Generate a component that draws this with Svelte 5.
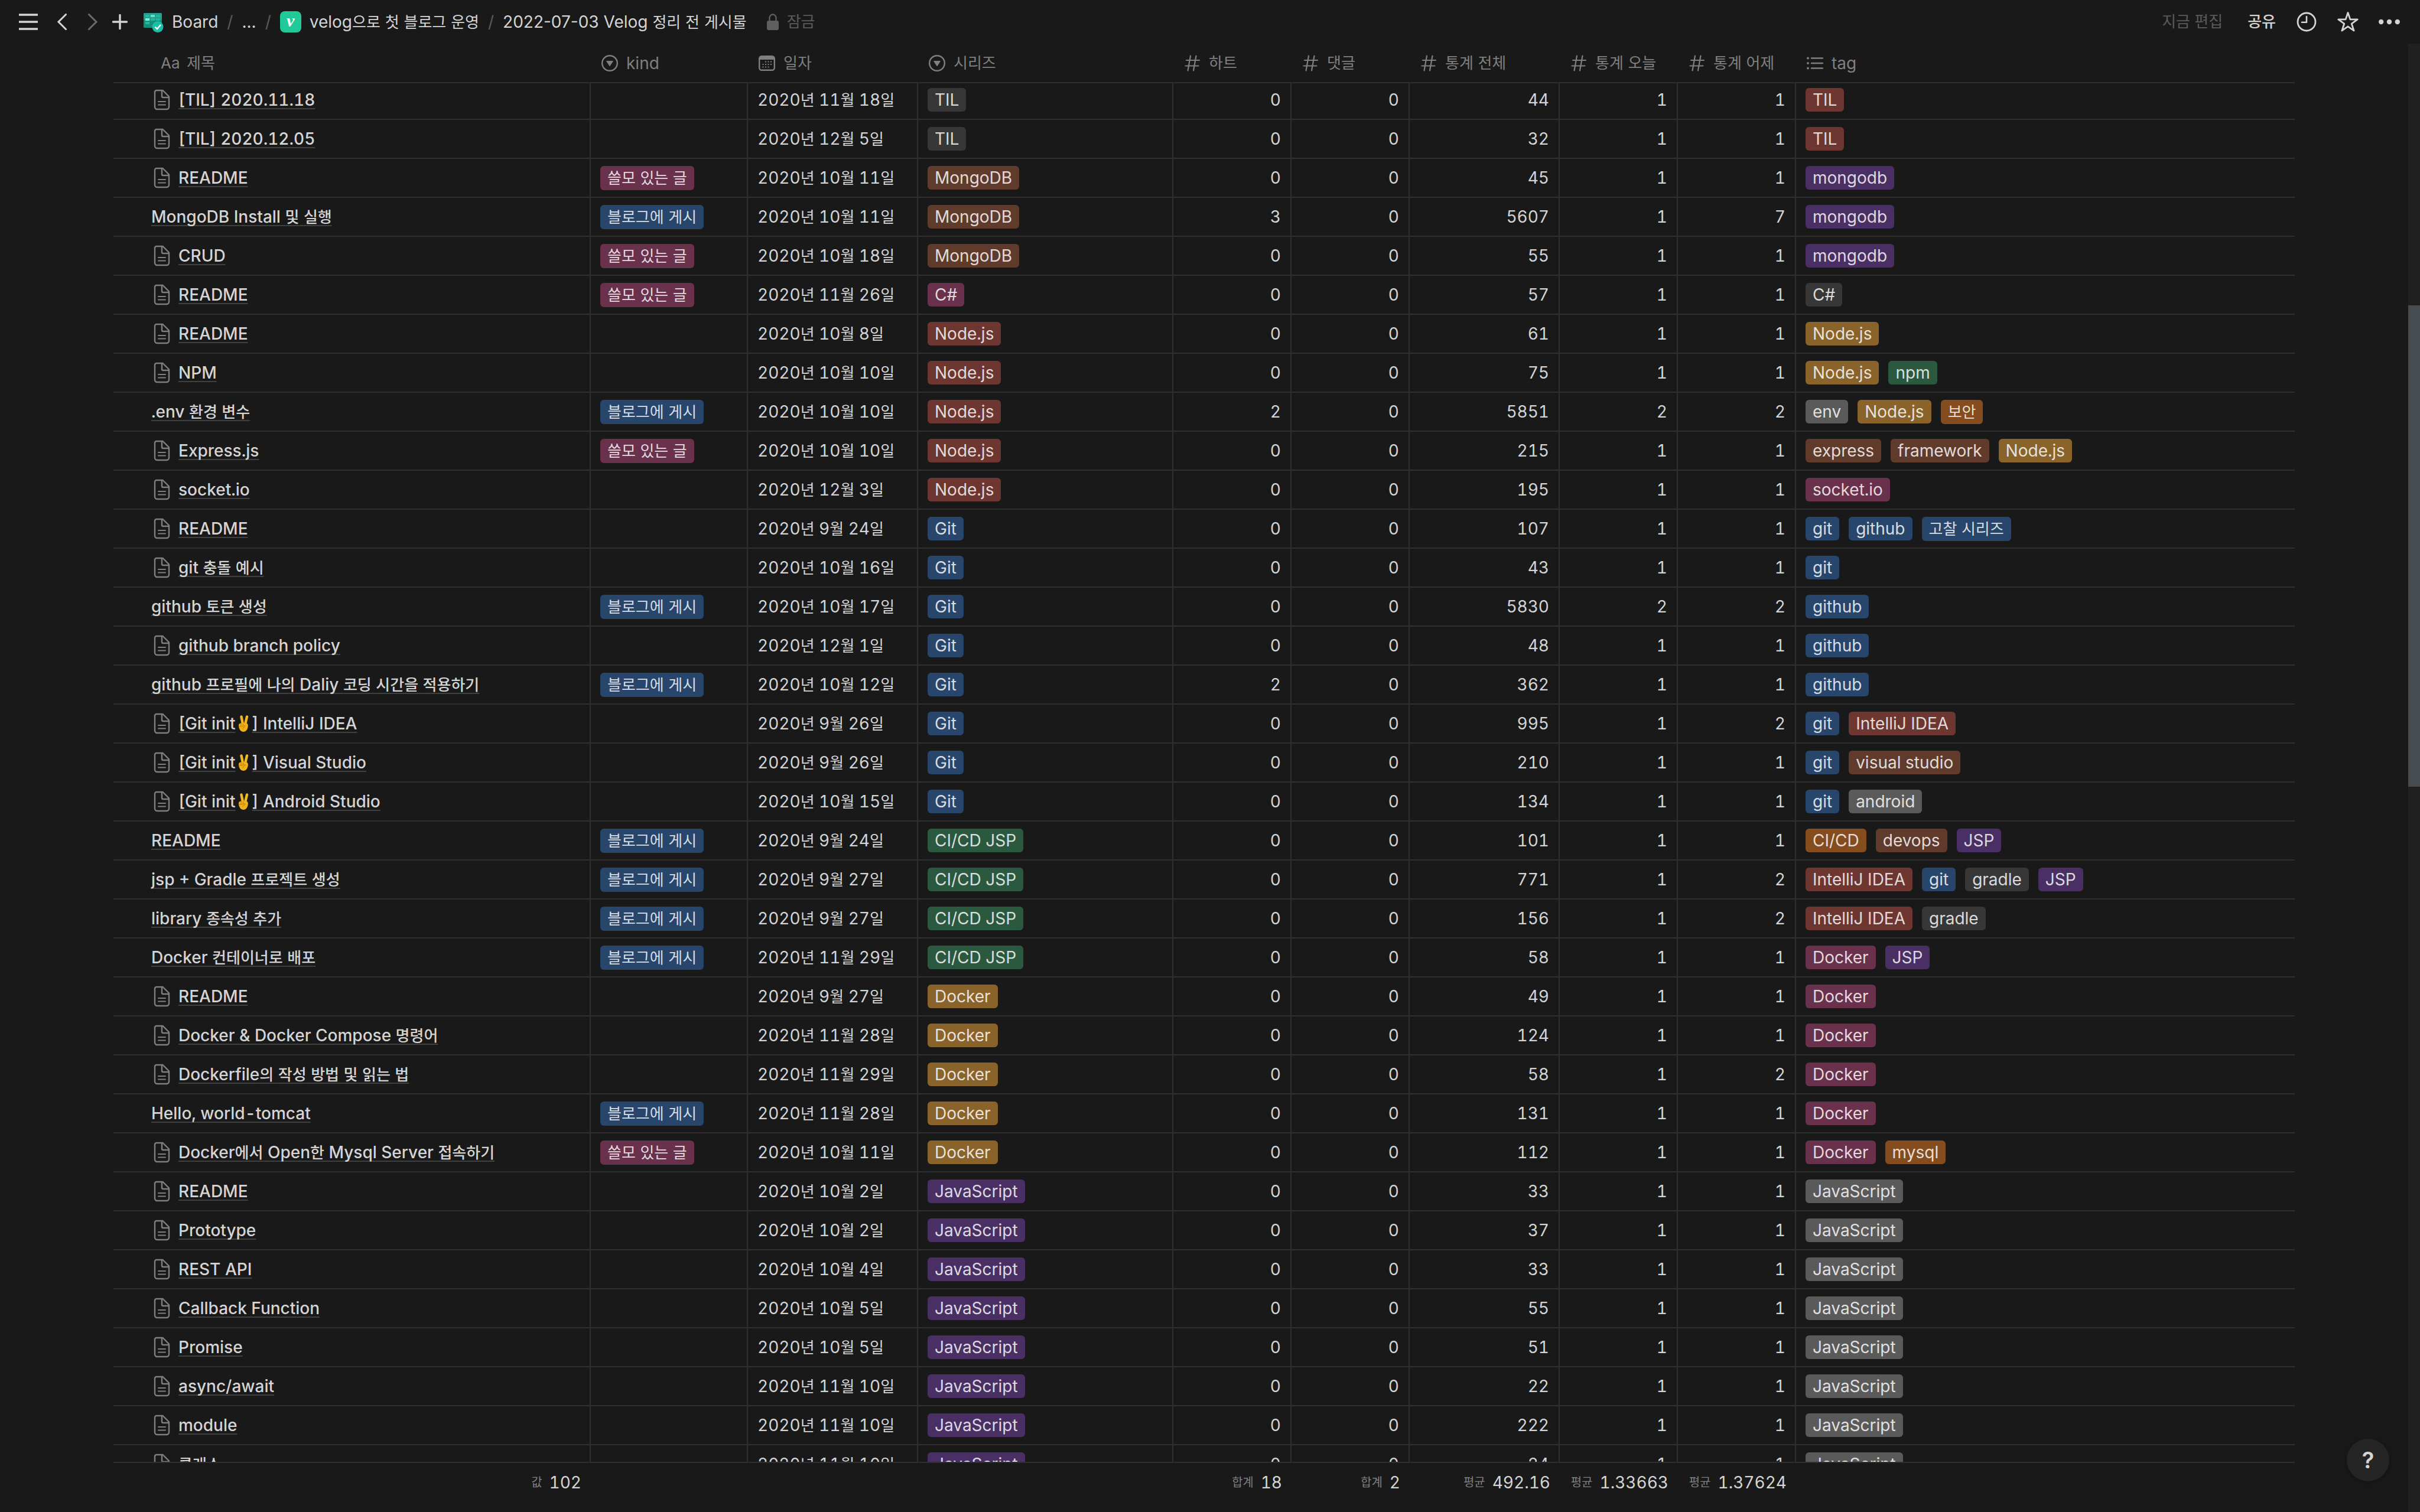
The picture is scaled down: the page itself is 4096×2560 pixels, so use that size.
<script>
  const kinds = {
    u: { label: '쓸모 있는 글', color: 'pink' },
    b: { label: '블로그에 게시', color: 'blue' }
  };

  const seriesColors = {
    TIL: 'default', MongoDB: 'brown', 'C#': 'pink', 'Node.js': 'red', Git: 'blue',
    'CI/CD JSP': 'green', Docker: 'yellow', JavaScript: 'purple'
  };

  const tagColors = {
    TIL: 'red', mongodb: 'purple', 'C#': 'default', 'Node.js': 'yellow', npm: 'green',
    env: 'gray', 보안: 'orange', express: 'brown', framework: 'brown', 'socket.io': 'pink',
    git: 'blue', github: 'blue', '고찰 시리즈': 'blue', 'IntelliJ IDEA': 'red',
    'visual studio': 'brown', android: 'gray', 'CI/CD': 'orange', devops: 'brown',
    JSP: 'purple', gradle: 'default', Docker: 'pink', mysql: 'orange', JavaScript: 'gray'
  };

  // title, has page icon, kind, date, series, hearts, comments, total, today, yesterday, tags
  const rows = [
    ['[TIL] 2020.11.18', 1, '', '2020년 11월 18일', 'TIL', 0, 0, 44, 1, 1, ['TIL']],
    ['[TIL] 2020.12.05', 1, '', '2020년 12월 5일', 'TIL', 0, 0, 32, 1, 1, ['TIL']],
    ['README', 1, 'u', '2020년 10월 11일', 'MongoDB', 0, 0, 45, 1, 1, ['mongodb']],
    ['MongoDB Install 및 실행', 0, 'b', '2020년 10월 11일', 'MongoDB', 3, 0, 5607, 1, 7, ['mongodb']],
    ['CRUD', 1, 'u', '2020년 10월 18일', 'MongoDB', 0, 0, 55, 1, 1, ['mongodb']],
    ['README', 1, 'u', '2020년 11월 26일', 'C#', 0, 0, 57, 1, 1, ['C#']],
    ['README', 1, '', '2020년 10월 8일', 'Node.js', 0, 0, 61, 1, 1, ['Node.js']],
    ['NPM', 1, '', '2020년 10월 10일', 'Node.js', 0, 0, 75, 1, 1, ['Node.js', 'npm']],
    ['.env 환경 변수', 0, 'b', '2020년 10월 10일', 'Node.js', 2, 0, 5851, 2, 2, ['env', 'Node.js', '보안']],
    ['Express.js', 1, 'u', '2020년 10월 10일', 'Node.js', 0, 0, 215, 1, 1, ['express', 'framework', 'Node.js']],
    ['socket.io', 1, '', '2020년 12월 3일', 'Node.js', 0, 0, 195, 1, 1, ['socket.io']],
    ['README', 1, '', '2020년 9월 24일', 'Git', 0, 0, 107, 1, 1, ['git', 'github', '고찰 시리즈']],
    ['git 충돌 예시', 1, '', '2020년 10월 16일', 'Git', 0, 0, 43, 1, 1, ['git']],
    ['github 토큰 생성', 0, 'b', '2020년 10월 17일', 'Git', 0, 0, 5830, 2, 2, ['github']],
    ['github branch policy', 1, '', '2020년 12월 1일', 'Git', 0, 0, 48, 1, 1, ['github']],
    ['github 프로필에 나의 Daliy 코딩 시간을 적용하기', 0, 'b', '2020년 10월 12일', 'Git', 2, 0, 362, 1, 1, ['github']],
    ['[Git init✌] IntelliJ IDEA', 1, '', '2020년 9월 26일', 'Git', 0, 0, 995, 1, 2, ['git', 'IntelliJ IDEA']],
    ['[Git init✌] Visual Studio', 1, '', '2020년 9월 26일', 'Git', 0, 0, 210, 1, 1, ['git', 'visual studio']],
    ['[Git init✌] Android Studio', 1, '', '2020년 10월 15일', 'Git', 0, 0, 134, 1, 1, ['git', 'android']],
    ['README', 0, 'b', '2020년 9월 24일', 'CI/CD JSP', 0, 0, 101, 1, 1, ['CI/CD', 'devops', 'JSP']],
    ['jsp + Gradle 프로젝트 생성', 0, 'b', '2020년 9월 27일', 'CI/CD JSP', 0, 0, 771, 1, 2, ['IntelliJ IDEA', 'git', 'gradle', 'JSP']],
    ['library 종속성 추가', 0, 'b', '2020년 9월 27일', 'CI/CD JSP', 0, 0, 156, 1, 2, ['IntelliJ IDEA', 'gradle']],
    ['Docker 컨테이너로 배포', 0, 'b', '2020년 11월 29일', 'CI/CD JSP', 0, 0, 58, 1, 1, ['Docker', 'JSP']],
    ['README', 1, '', '2020년 9월 27일', 'Docker', 0, 0, 49, 1, 1, ['Docker']],
    ['Docker & Docker Compose 명령어', 1, '', '2020년 11월 28일', 'Docker', 0, 0, 124, 1, 1, ['Docker']],
    ['Dockerfile의 작성 방법 및 읽는 법', 1, '', '2020년 11월 29일', 'Docker', 0, 0, 58, 1, 2, ['Docker']],
    ['Hello, world-tomcat', 0, 'b', '2020년 11월 28일', 'Docker', 0, 0, 131, 1, 1, ['Docker']],
    ['Docker에서 Open한 Mysql Server 접속하기', 1, 'u', '2020년 10월 11일', 'Docker', 0, 0, 112, 1, 1, ['Docker', 'mysql']],
    ['README', 1, '', '2020년 10월 2일', 'JavaScript', 0, 0, 33, 1, 1, ['JavaScript']],
    ['Prototype', 1, '', '2020년 10월 2일', 'JavaScript', 0, 0, 37, 1, 1, ['JavaScript']],
    ['REST API', 1, '', '2020년 10월 4일', 'JavaScript', 0, 0, 33, 1, 1, ['JavaScript']],
    ['Callback Function', 1, '', '2020년 10월 5일', 'JavaScript', 0, 0, 55, 1, 1, ['JavaScript']],
    ['Promise', 1, '', '2020년 10월 5일', 'JavaScript', 0, 0, 51, 1, 1, ['JavaScript']],
    ['async/await', 1, '', '2020년 11월 10일', 'JavaScript', 0, 0, 22, 1, 1, ['JavaScript']],
    ['module', 1, '', '2020년 11월 10일', 'JavaScript', 0, 0, 222, 1, 1, ['JavaScript']],
    ['클래스', 1, '', '2020년 11월 10일', 'JavaScript', 0, 0, 24, 1, 1, ['JavaScript']]
  ];

  const columns = [
    { icon: 'select', label: 'kind' },
    { icon: 'date', label: '일자' },
    { icon: 'select', label: '시리즈' },
    { icon: 'number', label: '하트' },
    { icon: 'number', label: '댓글' },
    { icon: 'number', label: '통계 전체' },
    { icon: 'number', label: '통계 오늘' },
    { icon: 'number', label: '통계 어제' },
    { icon: 'list', label: 'tag' }
  ];

  const totals = [
    ['값', '102'], null, null, null, ['합계', '18'], ['합계', '2'],
    ['평균', '492.16'], ['평균', '1.33663'], ['평균', '1.37624'], null
  ];

  const scroll = { start: 17.8, size: 32.8 };

  // Hangul runs are set slightly smaller than the Latin text around them.
  const runs = (text) => text.split(/([\uAC00-\uD7A3]+|✌)/).filter(Boolean);
  const isHangul = (part) => /^[\uAC00-\uD7A3]/.test(part);
</script>

{#snippet mixed(text)}{#each runs(text) as part}{#if part === '✌'}<svg class="hand" viewBox="0 0 18 28" role="img" aria-label="✌"><path d="M5.500 2.500 8 15M15 2.500 12 15" stroke="#f2b822" stroke-width="4.400" stroke-linecap="round" fill="none"/><path d="M1 17c0-2 1.500-3.500 3.500-3.500h9c2.500 0 3.700 2 3.300 5C16.200 24 13.500 28 9 28S1 23.500 1 17z" fill="#efb01a"/><path d="M2.500 18.500c2 1.500 5 0 8-.8 1.600-.4 2 1.300.7 1.900-2 .8-3.200 1.900-3.400 3.400M5 14v3.500M8.500 14.500V17" fill="none" stroke="#b9790c" stroke-width="1" stroke-linecap="round"/></svg>{:else if isHangul(part)}<span class="ko">{part}</span>{:else}{part}{/if}{/each}{/snippet}

{#snippet propIcon(name)}
  <svg class="prop" viewBox="0 0 28 28" aria-hidden="true">
    {#if name === 'select'}
      <circle cx="14" cy="14" r="12.800" fill="none" stroke="currentColor" stroke-width="2.400" />
      <path d="M9 10h10c.7 0 1 .5.6 1.100l-5 7.600c-.3.500-.9.500-1.200 0l-5-7.600C8 10.500 8.300 10 9 10z" fill="currentColor" />
    {:else if name === 'date'}
      <rect x="1.200" y="2.200" width="25.600" height="23.600" rx="4" fill="none" stroke="currentColor" stroke-width="2.400" />
      <path d="M1 8V5.500C1 3 2.500 2 5 2h18c2.500 0 4 1 4 3.500V8z" fill="currentColor" />
      <path d="M11 11.500h2m2.500 0h2m2.500 0h2M6.500 16h2m2.500 0h2m2.500 0h2m2.500 0h2M6.500 20.500h2m2.500 0h2m2.500 0h2" stroke="currentColor" stroke-width="2" fill="none" />
    {:else if name === 'number'}
      <path d="M11 1.500 6.500 26.500M20.500 1.500 16 26.500M4 9h22M2.500 18.500h22" fill="none" stroke="currentColor" stroke-width="2.200" stroke-linecap="round" />
    {:else}
      <path d="M8 5.500h19M8 14h19M8 22.500h19" fill="none" stroke="currentColor" stroke-width="2.400" stroke-linecap="round" />
      <circle cx="2" cy="5.500" r="1.900" fill="currentColor" /><circle cx="2" cy="14" r="1.900" fill="currentColor" /><circle cx="2" cy="22.500" r="1.900" fill="currentColor" />
    {/if}
  </svg>
{/snippet}

<div class="app">
  <header class="topbar">
    <button class="menu" aria-label="메뉴">
      <svg width="32" height="28" viewBox="0 0 32 28"><path d="M0 2h32M0 14h32M0 26h32" stroke="currentColor" stroke-width="3.400" /></svg>
    </button>
    <div class="history">
      <button aria-label="뒤로">
        <svg width="18" height="28" viewBox="0 0 18 28"><path d="M15.500 1.500 3 14l12.500 12.500" fill="none" stroke="currentColor" stroke-width="3" stroke-linecap="round" /></svg>
      </button>
      <button class="off" aria-label="앞으로">
        <svg width="18" height="28" viewBox="0 0 18 28"><path d="M2.500 1.500 15 14 2.500 26.500" fill="none" stroke="currentColor" stroke-width="3" stroke-linecap="round" /></svg>
      </button>
    </div>
    <button class="add" aria-label="새 페이지">
      <svg width="26" height="26" viewBox="0 0 26 26"><path d="M13 1.500v23M1.500 13h23" stroke="currentColor" stroke-width="3.400" stroke-linecap="round" /></svg>
    </button>
    <nav class="crumbs" aria-label="경로">
      <a href="#board">
        <svg width="36" height="36" viewBox="0 0 36 36" aria-hidden="true">
          <rect x="2" y="3" width="31" height="25" rx="1.500" fill="#12907a" />
          <rect x="2" y="3" width="31" height="12" rx="1.500" fill="#259e8b" />
          <path d="M5 6h7v4H5zM23 6h7v4h-7zM14 12h7v4h-7zM23 12h7v4h-7zM5 18h7v4H5z" fill="#21b8a0" />
          <path d="M14 6h7v4h-7z" fill="#5fe0ca" /><path d="M5 12h7v4H5z" fill="#7cf5df" />
          <circle cx="26" cy="26.500" r="9.500" fill="#1abfa8" />
          <path d="m21.500 26.500 3.500 3.500 6-7" fill="none" stroke="#fff" stroke-width="2.400" />
        </svg>
        Board
      </a>
      <span class="slash">/</span>
      <button class="more">...</button>
      <span class="slash">/</span>
      <a href="#velog"><span class="logo" aria-hidden="true">v</span><span>{@render mixed('velog으로 첫 블로그 운영')}</span></a>
      <span class="slash">/</span>
      <a href="#page"><span>{@render mixed('2022-07-03 Velog 정리 전 게시물')}</span></a>
    </nav>
    <button class="lock">
      <svg width="20" height="28" viewBox="0 0 20 28" aria-hidden="true"><path d="M4.500 12V7.500a5.500 6 0 0 1 11 0V12" fill="none" stroke="currentColor" stroke-width="2.400" /><rect x="0" y="12" width="20" height="16" rx="3" fill="currentColor" /></svg>
      <span class="ko">잠금</span>
    </button>
    <div class="actions">
      <span class="edited ko">지금 편집</span>
      <button class="share ko">공유</button>
      <button aria-label="업데이트">
        <svg width="36" height="36" viewBox="0 0 36 36"><circle cx="18" cy="18" r="15" fill="none" stroke="currentColor" stroke-width="2.800" /><path d="M18 9v9.800h-8" fill="none" stroke="currentColor" stroke-width="2.600" stroke-linecap="round" stroke-linejoin="round" /></svg>
      </button>
      <button aria-label="즐겨찾기">
        <svg width="36" height="36" viewBox="0 0 36 36"><path d="m18 2.500 3.900 11.400h12.300l-9.900 7.300 3.800 11.700L18 25.800 7.900 32.900l3.800-11.700-9.900-7.300h12.300z" fill="none" stroke="currentColor" stroke-width="2.800" stroke-linejoin="round" /></svg>
      </button>
      <button aria-label="더 보기">
        <svg width="36" height="36" viewBox="0 0 36 36" fill="currentColor"><circle cx="4.200" cy="18" r="4.200" /><circle cx="18" cy="18" r="4.200" /><circle cx="31.800" cy="18" r="4.200" /></svg>
      </button>
    </div>
  </header>

  <main>
    <table>
      <thead>
        <tr>
          <th scope="col" class="name"><span class="aa">Aa</span><span class="ko">제목</span></th>
          {#each columns as column}
            <th scope="col">{@render propIcon(column.icon)}<span>{@render mixed(column.label)}</span></th>
          {/each}
        </tr>
      </thead>
      <tbody>
        {#each rows as [title, icon, kind, date, series, hearts, comments, total, today, yesterday, tags]}
          <tr>
            <td class="name">
              {#if icon}
                <svg class="page" viewBox="0 0 36 36" aria-hidden="true">
                  <path d="M9 2h10.500L30 12.500V30a4 4 0 0 1-4 4H10a4 4 0 0 1-4-4V5a3 3 0 0 1 3-3z" fill="none" stroke="currentColor" stroke-width="2.400" stroke-linejoin="round" />
                  <path d="M18 2.500V12a2 2 0 0 0 2 2h9.500" fill="none" stroke="currentColor" stroke-width="2.400" />
                  <path d="M12 21h12M12 26.500h12" stroke="currentColor" stroke-width="2" stroke-linecap="round" />
                </svg>
              {/if}
              <a href="#page">{@render mixed(title)}</a>
            </td>
            <td>{#if kind}<span class="tag {kinds[kind].color}">{@render mixed(kinds[kind].label)}</span>{/if}</td>
            <td><span>{@render mixed(date)}</span></td>
            <td><span class="tag {seriesColors[series]}">{series}</span></td>
            {#each [hearts, comments, total, today, yesterday] as value}
              <td class="num">{value}</td>
            {/each}
            <td>
              {#each tags as tag}
                <span class="tag {tagColors[tag]}">{@render mixed(tag)}</span>
              {/each}
            </td>
          </tr>
        {/each}
      </tbody>
      <tfoot>
        <tr>
          {#each totals as total}
            <td>{#if total}<small>{total[0]}</small>{total[1]}{/if}</td>
          {/each}
        </tr>
      </tfoot>
    </table>
    <div class="track"><div class="thumb" style="top: {scroll.start}%; height: {scroll.size}%"></div></div>
  </main>
  <button class="help" aria-label="도움말">?</button>
</div>

<style>
  :global(body) {
    background: #191919;
  }

  .app {
    position: relative;
    display: flex;
    flex-direction: column;
    height: 100vh;
    overflow: hidden;
    background: #191919;
    color: #d4d4d4;
    font: 400 28px/40px Inter, 'Noto Sans CJK KR', sans-serif;
    white-space: nowrap;
  }

  .ko {
    font-size: 26px;
  }

  button {
    display: flex;
    align-items: center;
    padding: 0;
    border: 0;
    background: none;
    color: inherit;
    font: inherit;
    cursor: pointer;
  }

  a {
    color: inherit;
    text-decoration: none;
  }

  svg {
    display: block;
    flex: none;
  }

  .topbar {
    display: flex;
    align-items: center;
    height: 74px;
    padding: 0 34px 0 32px;
    box-sizing: border-box;
    flex: none;
  }

  .history {
    display: flex;
    gap: 34px;
    margin: 0 24px 0 32px;
  }

  .off {
    color: #6a6a6a;
  }

  .crumbs {
    display: flex;
    align-items: center;
    gap: 15px;
    margin-left: 25px;
  }

  .crumbs a {
    display: flex;
    align-items: center;
    gap: 14px;
  }

  .slash {
    color: #5a5a5a;
  }

  .logo {
    width: 36px;
    height: 36px;
    border-radius: 8px;
    background: #20c997;
    color: #fff;
    font: italic 700 30px/32px 'Liberation Serif', serif;
    text-align: center;
  }

  .lock {
    gap: 14px;
    margin-left: 34px;
    color: #5f5f5f;
  }

  .lock .ko {
    color: #5a5a5a;
  }

  .actions {
    display: flex;
    align-items: center;
    gap: 34px;
    margin-left: auto;
  }

  .edited {
    color: #5a5a5a;
  }

  .share {
    margin-left: 8px;
    font-size: 26px;
    font-weight: 500;
  }

  main {
    display: flex;
    flex: 1;
    min-height: 0;
  }

  table {
    display: flex;
    flex: 1;
    flex-direction: column;
    min-width: 0;
    padding: 0 192px;
    font-variant-numeric: tabular-nums;
  }

  thead,
  tfoot {
    display: block;
    flex: none;
  }

  tbody {
    display: block;
    flex: 1;
    min-height: 0;
    overflow: hidden;
  }

  tr {
    display: grid;
    grid-template-columns: 808px 266px 288px 432px 200px 200px 254px 200px 200px 1fr;
    box-sizing: border-box;
  }

  th,
  td {
    display: flex;
    align-items: center;
    box-sizing: border-box;
    padding: 0 16px;
  }

  thead tr {
    height: 67px;
    border-bottom: 2px solid #2f2f2f;
  }

  th {
    gap: 14px;
    padding: 0 18px;
    color: #7f7f7f;
    font-weight: 400;
  }

  th.name {
    gap: 12px;
    padding-left: 80px;
  }

  .aa {
    width: 32px;
    font-size: 26px;
  }

  .prop {
    width: 28px;
    height: 28px;
  }

  tbody tr {
    height: 66px;
    border-bottom: 2px solid #2f2f2f;
  }

  /* the list is scrolled slightly past the top of its first row */
  tbody tr:first-child {
    margin-top: -4px;
  }

  tbody td {
    gap: 16px;
    border-right: 2px solid #2f2f2f;
  }

  tbody td:last-child {
    border-right: 0;
  }

  td.name {
    gap: 10px;
    padding-left: 64px;
    font-weight: 500;
  }

  td.name a {
    text-decoration: underline 2px #404040;
    text-underline-offset: 4px;
    text-decoration-skip-ink: none;
  }

  .page {
    width: 36px;
    height: 36px;
    color: #7f7f7f;
  }

  .hand {
    display: inline-block;
    width: 18px;
    height: 28px;
    margin: 0 5px;
    vertical-align: -4px;
  }

  .num {
    justify-content: flex-end;
  }

  .tag {
    padding: 0 12px;
    border-radius: 6px;
    color: #ffffffd4;
  }

  .default { background: #373737; }
  .gray { background: #5a5a5a; }
  .brown { background: #603b2c; }
  .orange { background: #854c1d; }
  .yellow { background: #89632a; }
  .green { background: #2b593f; }
  .blue { background: #28456c; }
  .purple { background: #492f64; }
  .pink { background: #69314c; }
  .red { background: #6e3630; }

  tfoot tr {
    height: 68px;
    margin-bottom: 17px;
    border-top: 2px solid #2f2f2f;
  }

  tfoot td {
    justify-content: flex-end;
    gap: 12px;
  }

  small {
    color: #7f7f7f;
    font-size: 20px;
  }

  .track {
    position: relative;
    width: 20px;
    background: #202020;
  }

  .thumb {
    position: absolute;
    width: 100%;
    background: #474c50;
  }

  .help {
    position: absolute;
    right: 52px;
    bottom: 52px;
    justify-content: center;
    width: 72px;
    height: 72px;
    border-radius: 50%;
    background: #252525;
    box-shadow: 0 2px 8px #0000004d;
    font-size: 38px;
    font-weight: 600;
  }
</style>
